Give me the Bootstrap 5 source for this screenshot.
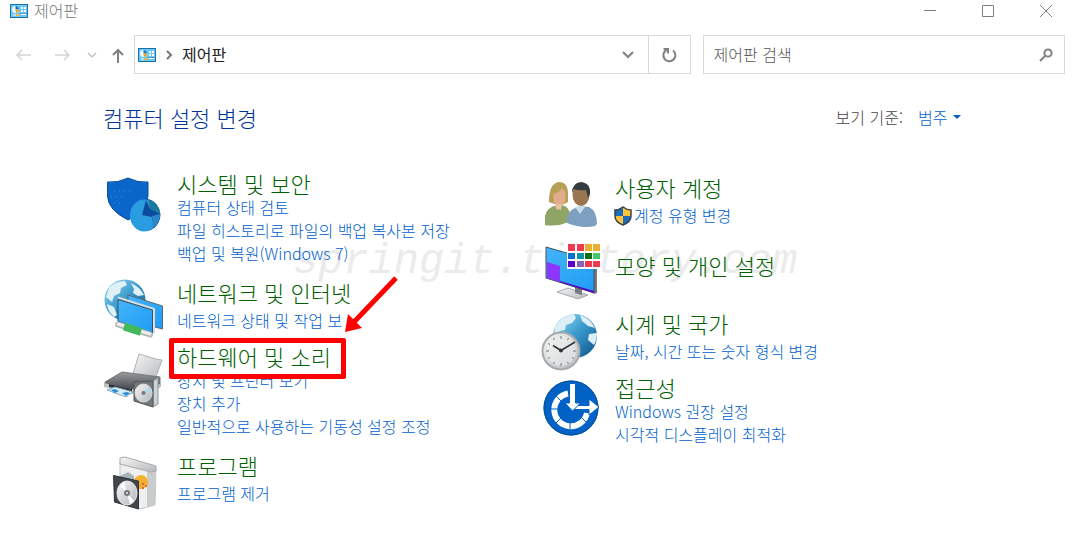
<!DOCTYPE html>
<html lang="ko">
<head>
<meta charset="utf-8">
<meta name="viewport" content="width=device-width, initial-scale=1">
<title>제어판</title>
<link href="https://cdn.jsdelivr.net/npm/bootstrap@5.3.0/dist/css/bootstrap.min.css" rel="stylesheet">
<style>
body{font-family:"Noto Sans CJK KR",sans-serif;font-size:16px;font-weight:300;line-height:22px;color:#222;background:#fff}
a{text-decoration:none;color:#005fcc}
a:hover{text-decoration:underline}
svg{display:block;flex:none;overflow:visible}
.titlebar{height:22px;padding-left:10px;color:#777}
.titlebar span{margin-left:6px;line-height:20px;padding-bottom:2px}
.plain{border:0;background:none;padding:0;color:#808080;display:flex;align-items:center;justify-content:center}
.winbtn{width:58px;height:22px}
.toolbar{margin-top:13px;padding:0 10px 0 15px;height:39px}
.history{width:119px}
.boxed{border:1px solid #d9d9d9;height:39px}
.address{flex:557 1 0;min-width:0}
.address span{padding-bottom:2px}
.finder{flex:362 1 0;min-width:0;margin-left:12px}
.finder input{font:inherit;border:0;outline:0;padding:0 0 2px 10px;min-width:0;color:#555}
.finder input::placeholder{color:#555;opacity:1}
.refresh{width:42px;border-left:1px solid #d9d9d9}
.dropper{width:40px}
.panel{padding:28px 96px 16px 103px}
.panel h1{font-size:22px;line-height:30px;font-weight:300;color:#003399;margin:0}
.viewby{padding-right:18px;color:#444}
.viewby select{font:inherit;appearance:none;border:0;background:none;padding:0;color:#005fcc;margin-left:15px;margin-right:5px}
.groups{margin-top:39px}
.watermark{left:190px;top:136px;font:italic 42px/48px "Liberation Mono",monospace;color:#ebebeb;pointer-events:none}
.slot{width:62px;height:60px}
.item{display:flex;gap:12px;position:relative}
.item h2{font-size:22px;line-height:24px;font-weight:300;margin:0 0 1px}
.item h2 a{color:#006000}
.item li{font-size:16px;line-height:23px;white-space:nowrap}
.item.airy h2{margin-bottom:5px}
.item.middle h2{margin-top:10px}
.right-side{padding-top:4px}
.gap-s{margin-bottom:4px}
.gap-m{margin-bottom:8px}
.gap-l{margin-bottom:15px}
.marked{position:relative;z-index:1;width:max-content}
.marked::before{content:"";position:absolute;z-index:-1;inset:-6px -15px -11px -8px;border:5px solid #f00;border-radius:2px;background:#fff}
.pointer{position:absolute;left:240px;top:-68px;z-index:2}
</style>
</head>
<body>
<svg width="0" height="0" class="position-absolute" aria-hidden="true">
  <defs>
    <linearGradient id="sea" x1="0" y1="0" x2="1" y2="1"><stop stop-color="#a9dcf2"/><stop offset=".45" stop-color="#3f9fd0"/><stop offset="1" stop-color="#0b4f8c"/></linearGradient>
    <linearGradient id="screen" x1="0" y1="0" x2="1" y2="1"><stop stop-color="#45b4fa"/><stop offset="1" stop-color="#1e9cf5"/></linearGradient>
    <linearGradient id="metal" x1="0" y1="0" x2="1" y2="1"><stop stop-color="#f6f6f6"/><stop offset="1" stop-color="#b4b8bb"/></linearGradient>
    <linearGradient id="dark" x1="0" y1="0" x2="0" y2="1"><stop stop-color="#9a9ea2"/><stop offset="1" stop-color="#34383d"/></linearGradient>
    <symbol id="cpl" viewBox="0 0 18 14">
      <path fill="#1c6fa6" d="M0 0h18v14H0z"/><path fill="#6cc8f7" d="M1 1h16v12H1z"/>
      <circle cx="5.500" cy="5.500" r="3.500" fill="#eefaff"/><path fill="#1478c8" d="M5.500 5.500V2A3.500 3.500 0 0 1 9 5.500z"/><path fill="#f0a020" d="M5.500 5.500L9 5.500A3.500 3.500 0 0 1 6 9z"/>
      <path fill="#fff" d="M11 3h2v2h-2zm3 0h2v2h-2zm-3 3h2v2h-2zm3 0h2v2h-2zM3 10.500h3v1H3zm8-1h5v1.500h-5z"/><path fill="#ffb22e" d="M6.500 10h3v2h-3z"/><path fill="#1460a0" d="M10.500 9h6v.6h-6z"/>
    </symbol>
  </defs>
</svg>

<header class="titlebar d-flex align-items-center">
  <svg width="18" height="14"><use href="#cpl"/></svg>
  <span class="me-auto">제어판</span>
  <button class="plain winbtn" aria-label="최소화"><svg width="12" height="12" fill="none" stroke="currentColor"><path d="M0 5.500h12"/></svg></button>
  <button class="plain winbtn" aria-label="최대화"><svg width="12" height="12" fill="none" stroke="currentColor"><path d="M.5.500h11v11H.5z"/></svg></button>
  <button class="plain winbtn" aria-label="닫기"><svg width="12" height="12" fill="none" stroke="currentColor"><path d="M0 0l12 12M12 0L0 12"/></svg></button>
</header>

<nav class="toolbar d-flex align-items-center">
  <div class="history d-flex align-items-center flex-shrink-0">
    <button class="plain" aria-label="뒤로"><svg width="17" height="14" fill="none" stroke="#d4d4d4" stroke-width="1.500"><path d="M16 7H2M7 2L2 7l5 5"/></svg></button>
    <button class="plain ms-4" aria-label="앞으로"><svg width="14" height="14" fill="none" stroke="#d4d4d4" stroke-width="1.500"><path d="M-1 7h14M8 2l5 5-5 5"/></svg></button>
    <button class="plain ms-3" aria-label="최근 위치"><svg width="10" height="8" fill="none" stroke="#c4c4c4" stroke-width="1.500"><path d="M2 2l4 4 4-4"/></svg></button>
    <button class="plain ms-3" aria-label="위로"><svg width="12" height="16" fill="none" stroke="#808080" stroke-width="2"><path d="M6 16V3M1 8l5-5 5 5"/></svg></button>
  </div>
  <div class="address boxed d-flex align-items-center">
    <svg class="ms-1" width="17" height="14"><use href="#cpl" x="-1" width="18" height="14"/></svg>
    <svg class="ms-2" width="10" height="10" fill="none" stroke="#777" stroke-width="2"><path d="M3 1l4 4-4 4"/></svg>
    <span class="ms-2 me-auto fw-normal">제어판</span>
    <button class="plain dropper h-100" aria-label="이전 위치"><svg width="12" height="8" fill="none" stroke="#808080" stroke-width="2"><path d="M1 1l5 5 5-5"/></svg></button>
    <button class="plain refresh h-100" aria-label="새로 고침"><svg width="16" height="16" fill="none" stroke="#808080" stroke-width="2"><path d="M12 3.500A6 6 0 1 1 5.500 3M2.500 2H7v4.500"/></svg></button>
  </div>
  <div class="finder boxed d-flex align-items-center">
    <input class="flex-grow-1 h-100" type="search" placeholder="제어판 검색" aria-label="제어판 검색">
    <button class="plain me-2 pe-1" aria-label="검색"><svg width="14" height="14" fill="none" stroke="#808080" stroke-width="2"><circle cx="10" cy="5" r="3.600"/><path d="M7.500 7.500L2 13"/></svg></button>
  </div>
</nav>

<main class="panel">
  <div class="position-relative">
    <div class="watermark position-absolute" aria-hidden="true">springit.tistory.com</div>
    <div class="d-flex align-items-center position-relative">
      <h1 class="me-auto">컴퓨터 설정 변경</h1>
      <div class="viewby d-flex align-items-center">
        <label for="view">보기 기준:</label>
        <select id="view"><option>범주</option></select>
        <svg width="8" height="4" fill="#005fcc"><path d="M0 0h8L4 4z"/></svg>
      </div>
    </div>
    <div class="groups row g-0 position-relative">
      <div class="col-6">
        <section class="item gap-l">
          <svg class="slot" viewBox="0 0 62 60">
            <path fill="#0a66c8" stroke="#075096" d="M25 7Q35 12 45 11V25Q44 40 25 49Q5 39 4.500 25V11Q15 12 25 7z"/>
            <ellipse cx="43" cy="44" rx="14" ry="16" fill="#1b5fa6"/><ellipse cx="41" cy="44.500" rx="14" ry="16" fill="#2a9de0"/><path fill="#1c7a9e" d="M45 28q11 3 12.500 15L47 39z"/><path fill="#0b4a9c" d="M43 29l4 9 10.500 5q0 8-6.500 14l-2-11-10-2z"/><path fill="#2d86cc" d="M49 45l8-2q0 9-6 14z"/>
            <path stroke="#3d9bd4" stroke-dasharray="1 4" d="M11 20h20M8 26h15M11 32h10"/>
          </svg>
          <div>
            <h2><a href="#">시스템 및 보안</a></h2>
            <ul class="list-unstyled m-0"><li><a href="#">컴퓨터 상태 검토</a></li><li><a href="#">파일 히스토리로 파일의 백업 복사본 저장</a></li><li><a href="#">백업 및 복원(Windows 7)</a></li></ul>
          </div>
        </section>
        <section class="item airy gap-s">
          <svg class="slot" viewBox="0 0 62 60">
            <circle cx="22" cy="20" r="20.500" fill="url(#sea)"/><path fill="#e0f1f6" d="M6 8Q12 1 22 1l2 4-6 3-1 5-6 3-2 6-6-5zM28 3q9 4 13 12l-6 1-5-3 1-4zM4 24l7 3 3 8-3 2q-6-5-7-13z"/>
            <path fill="url(#screen)" stroke="#5b6872" d="M25 15l34.500 11v23L25 40z"/><path fill="none" stroke="#d8dde0" stroke-width="2" d="M51 54V29L15 17.500"/>
            <path fill="url(#screen)" stroke="#42505c" d="M15 19.500L49.500 30v23L15 41.500z"/>
            <path stroke="#b3b7b9" stroke-width="6" stroke-linecap="round" d="M15 44.500L47 54.500"/><path stroke="#eee" stroke-width="3" stroke-linecap="round" d="M15 44L47 54"/><path stroke="#43b95c" stroke-width="8" d="M21 46.500L38 52"/>
          </svg>
          <div>
            <h2><a href="#">네트워크 및 인터넷</a></h2>
            <ul class="list-unstyled m-0"><li><a href="#">네트워크 상태 및 작업 보</a></li></ul>
          </div>
        </section>
        <section class="item gap-l">
          <svg class="slot" viewBox="0 0 62 60">
            <path fill="url(#metal)" stroke="#b5b5b5" d="M36 10l17 5 6 1-7 20-22-6z"/>
            <path fill="url(#dark)" stroke="#777" d="M2 38l17-10 38 5v10l-28 6-27-7z"/><path fill="#bfc2c4" d="M1 39l28 6 28-5v4l-28 6L1 43z"/><path fill="#2f3337" d="M6 40l23 5v3L6 43z"/>
            <path fill="#d9eefa" stroke="#8ab" d="M4 46l8-3 18 5-7 5z"/><path fill="#2b8bd0" d="M8 46l4-1 4 2-4 2zM19 49l5-1 3 1-4 3z"/>
            <path fill="#c9d4d8" stroke="#8d979c" d="M50 37l5-3v26l-5 3z"/><path fill="#73787c" stroke="#555" d="M31 38l19-1v26l-19-6z"/><ellipse cx="40.500" cy="49" rx="8.500" ry="9" fill="url(#metal)" stroke="#ddd"/><path fill="#a7dced" d="M40 49l6-6 2 5z"/><circle cx="40.500" cy="49" r="2" fill="#777"/>
          </svg>
          <div>
            <h2 class="marked"><a href="#">하드웨어 및 소리</a></h2>
            <ul class="list-unstyled m-0"><li><a href="#">장치 및 프린터 보기</a></li><li><a href="#">장치 추가</a></li><li><a href="#">일반적으로 사용하는 기동성 설정 조정</a></li></ul>
          </div>
          <svg class="pointer" width="56" height="58" viewBox="0 0 56 58" aria-hidden="true"><path stroke="#f00" stroke-width="5" d="M53 2L11 46"/><path fill="#f00" d="M2 56L5 38L19 52z"/></svg>
        </section>
        <section class="item airy">
          <svg class="slot" viewBox="0 0 62 60">
            <path fill="#efefef" stroke="#c4c4c4" d="M17 9l36 7-1 36-15 4-20-8z"/><path fill="#c9cccd" d="M44 18l8-2v36l-8 2z"/><path fill="url(#metal)" stroke="#aaa" d="M17 5l5-1 31 9v5l-5 1-31-8z"/><path fill="#a6b5bb" d="M17 23l8-4 6 4v8l-14-3z"/>
            <circle cx="38" cy="29" r="7" fill="#f3b02e"/><path fill="#e8673a" d="M39 30h2v2h-2zm3 2h2v2h-2zm-3 2h2v2h-2z"/>
            <path fill="#42474c" stroke="#2e3236" d="M10.500 22.500l25 5.500v28l-24-7z"/><ellipse cx="24" cy="40" rx="10" ry="12" fill="url(#metal)" stroke="#e8e8e8"/><path fill="#fff" d="M24 40l-7-7 4-4zM24 40l7 8-4 3z"/><circle cx="24" cy="40" r="3" fill="#73787c"/><circle cx="24" cy="40" r="1" fill="#eee"/>
          </svg>
          <div>
            <h2><a href="#">프로그램</a></h2>
            <ul class="list-unstyled m-0"><li><a href="#">프로그램 제거</a></li></ul>
          </div>
        </section>
      </div>
      <div class="col-6 right-side">
        <section class="item airy gap-m">
          <svg class="slot" viewBox="0 0 62 60">
            <path fill="#8fa565" d="M4 50V41q2-9 12-11h5q7 2 8 9l-1 8q-12 5-24 3z"/><path fill="#b7a056" d="M8 27q0-19 10-20 9 0 9 12v8l-8 4z"/><path fill="#e2ac8c" d="M12 19q6-1 9-6 5 5 3 13-5 9-11 2z"/><path fill="#e9c1a6" d="M14 29h7l-1 6-5-1z"/>
            <path fill="#7e9fbf" d="M26 48q-1-10 6-14l7-3 9 1q8 4 8 17l-2 2q-13 3-28-3z"/><path fill="#c9dcea" d="M34 32l5 7 5-7-2-2z"/><ellipse cx="40" cy="20" rx="8.500" ry="11" fill="#9a7650"/><path fill="#353c40" d="M31 18q0-10 9-11 10 1 9 12l-2 4-2-8q-8 1-12-1z"/>
          </svg>
          <div>
            <h2><a href="#">사용자 계정</a></h2>
            <ul class="list-unstyled m-0"><li class="d-flex align-items-center">
              <svg width="19" height="20" viewBox="1 0 19 20"><path fill="#ffc23c" d="M9 1q4 3 8 3v6q0 6-8 9Q1 16 1 10V4q4 0 8-3z"/><path fill="#1b6bbd" d="M9 1v9H1V4q4 0 8-3zM9 10h8q0 6-8 9z"/><path fill="none" stroke="#3b4247" stroke-width="1.500" d="M9 1q4 3 8 3v6q0 6-8 9Q1 16 1 10V4q4 0 8-3z"/></svg>
              <a href="#">계정 유형 변경</a></li></ul>
          </div>
        </section>
        <section class="item middle gap-m">
          <svg class="slot" viewBox="0 0 62 60">
            <path fill="url(#metal)" stroke="#a8acaf" d="M16 49l11-4 20 7-10 4z"/><path fill="#767b80" d="M34 43l7 2v7l-7-2z"/>
            <path fill="#72797f" d="M53 17l3-1v34l-3 1z"/><path fill="url(#screen)" stroke="#42505c" d="M5 4l48 14v32L5 35z"/><path fill="#8b35ff" d="M6 19l13 4v16L6 35z"/><path fill="#5a00c8" d="M19 38l34 10v2L19 39z"/>
            <path fill="#fff" d="M26 0h35v26H26z"/>
            <path fill="#ef3a50" d="M27 1h7v7h-7zm9 0h7v7h-7zm8 17h7v6h-7zm8 0h7v6h-7z"/><path fill="#e8b02e" d="M44 1h7v7h-7zm8 0h7v7h-7z"/><path fill="#0a70cc" d="M27 10h7v6h-7z"/><path fill="#0a93aa" d="M36 10h7v6h-7z"/><path fill="#0c7012" d="M44 10h7v6h-7z"/><path fill="#43c867" d="M52 10h7v6h-7z"/><path fill="#5a00c8" d="M27 18h7v6h-7z"/><path fill="#8764b8" d="M36 18h7v6h-7z"/>
          </svg>
          <div><h2><a href="#">모양 및 개인 설정</a></h2></div>
        </section>
        <section class="item airy gap-s">
          <svg class="slot" viewBox="0 0 62 60">
            <circle cx="34" cy="25" r="22" fill="url(#sea)"/><path fill="#dceff6" d="M14 16Q21 4 33 3l2 4-4 5-6 2-1 5-5 1-6 5zM39 4q10 3 15 13l-7-2-6-5zM48 23l8-1q0 7-3 12l-6-5z"/>
            <circle cx="20" cy="40" r="18.500" fill="url(#metal)" stroke="#a5aaad" stroke-width="2"/><circle cx="20" cy="40" r="15" fill="#efefef" opacity=".6"/>
            <path stroke="#777" d="M20 25v3M20 52v3M5 40h3M32 40h3M12.500 27l1 2M27.500 27l-1 2M12.500 53l1-2M27.500 53l-1-2M7 32.500l2 1M33 47.500l-2-1M7 47.500l2-1"/><path fill="none" stroke="#2d3338" stroke-width="1.500" d="M12 34.500l8 5 14-8.500"/><circle cx="20" cy="39.500" r="2" fill="#2d3338"/>
          </svg>
          <div>
            <h2><a href="#">시계 및 국가</a></h2>
            <ul class="list-unstyled m-0"><li><a href="#">날짜, 시간 또는 숫자 형식 변경</a></li></ul>
          </div>
        </section>
        <section class="item">
          <svg class="slot" viewBox="0 0 62 60">
            <circle cx="30" cy="33" r="27.500" fill="#0062c4"/><circle cx="30" cy="33" r="27" fill="none" stroke="#084e96"/>
            <path fill="none" stroke="#fff" stroke-width="6" d="M27 18.500A16.500 16.500 0 1 0 46 38"/>
            <path stroke="#0062c4" d="M10 34h7M15 21l5 5M15 48l5-5M29 47v7M41 43l5 5"/>
            <path fill="#fff" stroke="#0062c4" d="M31 30.500h17V24l10 8-10 8v-5.500H31z"/><path fill="#fff" stroke="#0062c4" d="M28.500 8.500h6V28h5L31.500 36 24 28h4.500z"/>
          </svg>
          <div>
            <h2><a href="#">접근성</a></h2>
            <ul class="list-unstyled m-0"><li><a href="#">Windows 권장 설정</a></li><li><a href="#">시각적 디스플레이 최적화</a></li></ul>
          </div>
        </section>
      </div>
    </div>
  </div>
</main>
<script src="https://cdn.jsdelivr.net/npm/bootstrap@5.3.0/dist/js/bootstrap.bundle.min.js"></script>
</body>
</html>
